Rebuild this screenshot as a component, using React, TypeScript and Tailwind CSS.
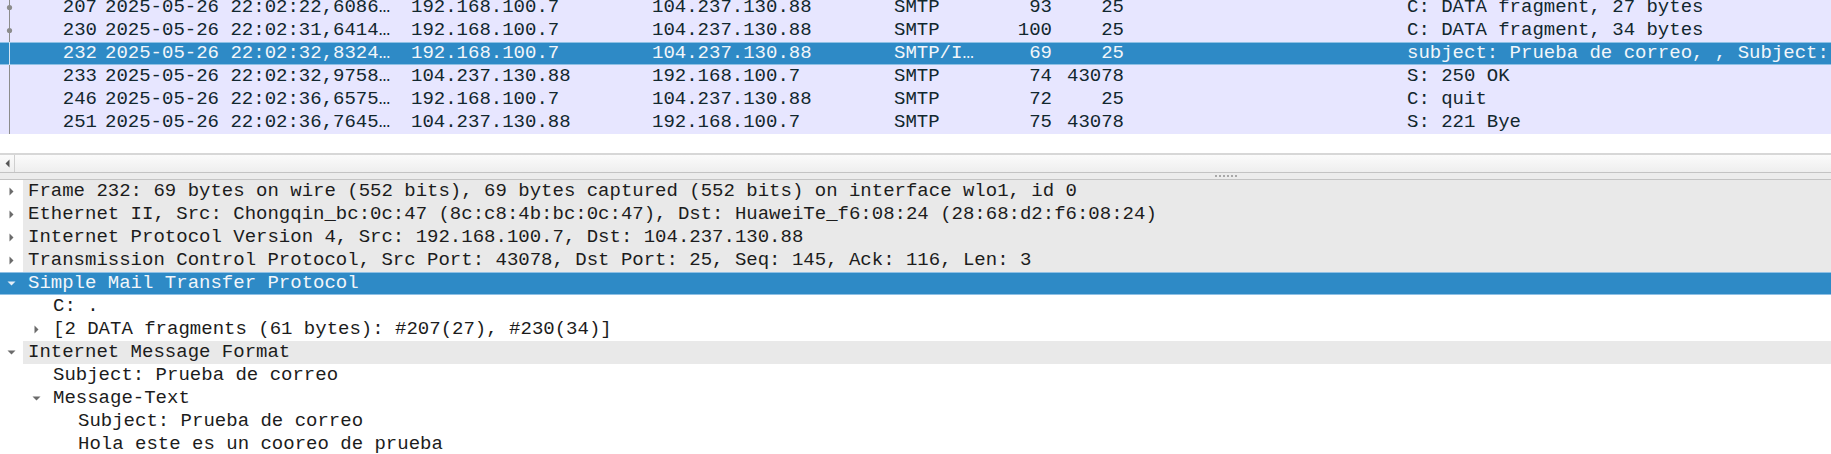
import React from "react";

type Pkt = {
  no: string;
  time: string;
  src: string;
  dst: string;
  proto: string;
  len: string;
  port: string;
  info: string;
  dot?: boolean;
  sel?: boolean;
};

const packets: Pkt[] = [
  { no: "207", time: "2025-05-26 22:02:22,6086…", src: "192.168.100.7", dst: "104.237.130.88", proto: "SMTP", len: "93", port: "25", info: "C: DATA fragment, 27 bytes", dot: true },
  { no: "230", time: "2025-05-26 22:02:31,6414…", src: "192.168.100.7", dst: "104.237.130.88", proto: "SMTP", len: "100", port: "25", info: "C: DATA fragment, 34 bytes", dot: true },
  { no: "232", time: "2025-05-26 22:02:32,8324…", src: "192.168.100.7", dst: "104.237.130.88", proto: "SMTP/I…", len: "69", port: "25", info: "subject: Prueba de correo, , Subject: Prueba de correo, , Hola este es un cooreo de prueba", sel: true },
  { no: "233", time: "2025-05-26 22:02:32,9758…", src: "104.237.130.88", dst: "192.168.100.7", proto: "SMTP", len: "74", port: "43078", info: "S: 250 OK" },
  { no: "246", time: "2025-05-26 22:02:36,6575…", src: "192.168.100.7", dst: "104.237.130.88", proto: "SMTP", len: "72", port: "25", info: "C: quit" },
  { no: "251", time: "2025-05-26 22:02:36,7645…", src: "104.237.130.88", dst: "192.168.100.7", proto: "SMTP", len: "75", port: "43078", info: "S: 221 Bye" },
];

function Related({ dot, sel }: { dot?: boolean; sel?: boolean }) {
  return (
    <svg width="20" height="23" viewBox="0 0 20 23" className="shrink-0 block">
      <line x1="9.5" y1="-2" x2="9.5" y2="25" stroke={sel ? "#d4e5f3" : "#8c8c8c"} strokeWidth="1" />
      {dot && <circle cx="9.5" cy="11.5" r="2.6" fill="#8c8c8c" />}
    </svg>
  );
}

function PacketRow({ p }: { p: Pkt }) {
  const rowCls = p.sel
    ? "flex h-[23px] items-center whitespace-pre bg-[#2e8ac6] text-[#f2f6fa] shadow-[inset_0_1px_0_#8fc0e4,inset_0_-1px_0_#8fc0e4]"
    : "flex h-[23px] items-center whitespace-pre bg-[#e7e6ff] text-[#12272e]";
  return (
    <div className={rowCls}>
      <Related dot={p.dot} sel={p.sel} />
      <div className="w-[77px] shrink-0 text-right">{p.no}</div>
      <div className="w-[314px] shrink-0 pl-[8px]">{p.time}</div>
      <div className="w-[241px] shrink-0">{p.src}</div>
      <div className="w-[242px] shrink-0">{p.dst}</div>
      <div className="w-[100px] shrink-0">{p.proto}</div>
      <div className="w-[58px] shrink-0 text-right">{p.len}</div>
      <div className="w-[72px] shrink-0 text-right">{p.port}</div>
      <div className="w-[283px] shrink-0" />
      <div className="flex-1 overflow-hidden">{p.info}</div>
    </div>
  );
}

function Arrow({ dir, light }: { dir: "right" | "down" | "none"; light?: boolean }) {
  const color = light ? "#e4eef7" : "#6b6b6b";
  return (
    <div className="w-[23px] h-[23px] shrink-0 flex items-center justify-center">
      {dir === "right" && (
        <svg width="5" height="9" viewBox="0 0 5 9">
          <path d="M0.5 0.5 L4.5 4.5 L0.5 8.5 Z" fill={color} />
        </svg>
      )}
      {dir === "down" && (
        <svg width="9" height="5" viewBox="0 0 9 5">
          <path d="M0.5 0.5 L8.5 0.5 L4.5 4.5 Z" fill={color} />
        </svg>
      )}
    </div>
  );
}

type Node = { text: string; level: 1 | 2 | 3; arrow: "right" | "down" | "none"; sel?: boolean };

const nodes: Node[] = [
  { text: "Frame 232: 69 bytes on wire (552 bits), 69 bytes captured (552 bits) on interface wlo1, id 0", level: 1, arrow: "right" },
  { text: "Ethernet II, Src: Chongqin_bc:0c:47 (8c:c8:4b:bc:0c:47), Dst: HuaweiTe_f6:08:24 (28:68:d2:f6:08:24)", level: 1, arrow: "right" },
  { text: "Internet Protocol Version 4, Src: 192.168.100.7, Dst: 104.237.130.88", level: 1, arrow: "right" },
  { text: "Transmission Control Protocol, Src Port: 43078, Dst Port: 25, Seq: 145, Ack: 116, Len: 3", level: 1, arrow: "right" },
  { text: "Simple Mail Transfer Protocol", level: 1, arrow: "down", sel: true },
  { text: "C: .", level: 2, arrow: "none" },
  { text: "[2 DATA fragments (61 bytes): #207(27), #230(34)]", level: 2, arrow: "right" },
  { text: "Internet Message Format", level: 1, arrow: "down" },
  { text: "Subject: Prueba de correo", level: 2, arrow: "none" },
  { text: "Message-Text", level: 2, arrow: "down" },
  { text: "Subject: Prueba de correo", level: 3, arrow: "none" },
  { text: "Hola este es un cooreo de prueba", level: 3, arrow: "none" },
];

function DetailRow({ n }: { n: Node }) {
  if (n.sel) {
    return (
      <div className="flex h-[23px] items-center whitespace-pre bg-[#2e8ac6] text-[#f2f6fa] shadow-[inset_0_1px_0_#8fc0e4,inset_0_-1px_0_#8fc0e4]">
        <Arrow dir={n.arrow} light />
        <div className="pl-[5px]">{n.text}</div>
      </div>
    );
  }
  if (n.level === 1) {
    return (
      <div className="flex h-[23px] items-center whitespace-pre text-[#1c1c1c]">
        <Arrow dir={n.arrow} />
        <div className="flex-1 h-full flex items-center pl-[5px] bg-[#e9e9e9]">{n.text}</div>
      </div>
    );
  }
  return (
    <div className={n.level === 2 ? "flex h-[23px] items-center whitespace-pre text-[#1c1c1c] pl-[25px]" : "flex h-[23px] items-center whitespace-pre text-[#1c1c1c] pl-[50px]"}>
      <Arrow dir={n.arrow} />
      <div className="pl-[5px]">{n.text}</div>
    </div>
  );
}

export default function App() {
  return (
    <div className="w-[1831px] h-[454px] overflow-hidden bg-white font-['Liberation_Mono','DejaVu_Sans_Mono',monospace] text-[19px] leading-[23px]">
      {/* Packet list */}
      <div className="h-[153px] overflow-hidden bg-white">
        <div className="-mt-[4px]">
          {packets.map((p) => (
            <PacketRow key={p.no} p={p} />
          ))}
        </div>
      </div>

      {/* Horizontal scrollbar */}
      <div className="h-[19px] flex border-t-2 border-[#d7d7d7] bg-gradient-to-b from-[#fbfbfb] to-[#eeeeee]">
        <div className="w-[15px] shrink-0 border-r border-[#cfcfcf] flex items-center justify-center">
          <svg width="5" height="9" viewBox="0 0 5 9">
            <path d="M4.5 0.5 L0.5 4.5 L4.5 8.5 Z" fill="#555555" />
          </svg>
        </div>
        <div className="flex-1" />
      </div>

      {/* Splitter */}
      <div className="h-[8px] border-t border-b border-[#c3c3c3] bg-[#ececec] flex items-center">
        <div className="flex gap-[2px] ml-[1215px]">
          <span className="w-[2px] h-[2px] bg-[#a8a8a8]" />
          <span className="w-[2px] h-[2px] bg-[#a8a8a8]" />
          <span className="w-[2px] h-[2px] bg-[#a8a8a8]" />
          <span className="w-[2px] h-[2px] bg-[#a8a8a8]" />
          <span className="w-[2px] h-[2px] bg-[#a8a8a8]" />
          <span className="w-[2px] h-[2px] bg-[#a8a8a8]" />
        </div>
      </div>

      {/* Packet details */}
      <div className="bg-white">
        {nodes.map((n, i) => (
          <DetailRow key={i} n={n} />
        ))}
      </div>
    </div>
  );
}
